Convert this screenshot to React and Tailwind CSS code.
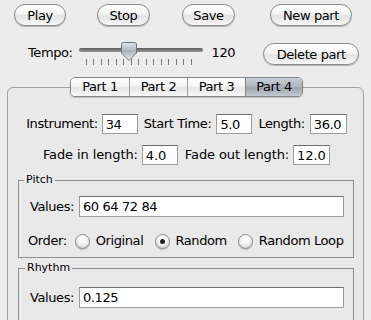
const aquaBtn =
  'h-[22px] rounded-full border border-[#8c8c8c] bg-[linear-gradient(to_bottom,#ffffff_0%,#f4f4f4_45%,#e3e3e3_55%,#f7f7f7_100%)] shadow-[0_1px_1px_rgba(0,0,0,0.25)] text-[13px] leading-none text-black flex items-center justify-center';

const field =
  'h-[20px] bg-white border border-[#9c9c9c] border-t-[#6e6e6e] text-[13px] leading-none text-black px-[3px] flex items-center';

function Radio({ checked }) {
  return (
    <span className="w-[15px] h-[15px] rounded-full border border-[#8a8a8a] bg-[radial-gradient(circle_at_50%_30%,#ffffff_0%,#f2f2f2_45%,#c9c9c9_100%)] shadow-[0_1px_1px_rgba(0,0,0,0.2)] flex items-center justify-center">
      {checked && <span className="w-[5px] h-[5px] rounded-full bg-[#222]" />}
    </span>
  );
}

function Slider() {
  const ticks = Array.from({ length: 15 }, (_, i) => i);
  return (
    <div className="relative w-[124px] h-[24px] ml-[6px]">
      <div className="mt-[6px] h-[4px] rounded-full bg-[linear-gradient(to_bottom,#5a5a5a,#9a9a9a)]" />
      <div className="mt-[7px] ml-[7px] flex gap-[6.5px]">
        {ticks.map((t) => (
          <span key={t} className="w-px h-[6px] bg-[#7a7a7a]" />
        ))}
      </div>
      <svg className="absolute left-[42px] top-[0px]" width="16" height="19" viewBox="0 0 16 19">
        <defs>
          <linearGradient id="thumb" x1="0" y1="0" x2="0" y2="1">
            <stop offset="0" stopColor="#dfe4ea" />
            <stop offset="0.5" stopColor="#aab3be" />
            <stop offset="1" stopColor="#eef1f4" />
          </linearGradient>
        </defs>
        <path d="M2.5 0.5 H13.5 Q15.5 0.5 15.5 2.5 V11 L8 18.5 L0.5 11 V2.5 Q0.5 0.5 2.5 0.5 Z" fill="url(#thumb)" stroke="#6d7480" />
      </svg>
    </div>
  );
}

export default function App() {
  return (
    <div className="w-[371px] h-[320px] overflow-hidden bg-[#ececec] font-['DejaVu_Sans',sans-serif] tracking-[-0.4px] text-black">
      {/* buttons */}
      <div className="flex pt-[4px]">
        <button className={`${aquaBtn} ml-[14px] w-[52px] border-[#6b7888] shadow-[0_0_0_1px_rgba(120,140,170,0.35)]`}>Play</button>
        <button className={`${aquaBtn} ml-[31px] w-[53px]`}>Stop</button>
        <button className={`${aquaBtn} ml-[32px] w-[53px]`}>Save</button>
        <button className={`${aquaBtn} ml-[35px] w-[82px]`}>New part</button>
      </div>

      {/* tempo */}
      <div className="flex items-start mt-[16px] h-[24px]">
        <span className="ml-[28px] mt-[3px] text-[13px] leading-[16px]">Tempo:</span>
        <Slider />
        <span className="ml-[9px] mt-[3px] text-[13px] leading-[16px]">120</span>
        <button className={`${aquaBtn} ml-[28px] mt-[1px] w-[96px] h-[21px]`}>Delete part</button>
      </div>

      {/* tabs */}
      <div className="relative z-10 flex mt-[11px] ml-[70px] w-[233px] h-[20px] rounded-[5px] border border-[#868686] overflow-hidden shadow-[0_1px_1px_rgba(0,0,0,0.2)] text-[13px]">
        {['Part 1', 'Part 2', 'Part 3'].map((p, i) => (
          <div
            key={p}
            className={`w-[58px] flex items-center justify-center bg-[linear-gradient(to_bottom,#ffffff_0%,#f4f4f4_45%,#e5e5e5_55%,#f7f7f7_100%)] ${i > 0 ? 'border-l border-[#a0a0a0]' : ''}`}
          >
            {p}
          </div>
        ))}
        <div className="flex-1 flex items-center justify-center border-l border-[#7c8590] bg-[linear-gradient(to_bottom,#c9cfd6_0%,#b0b7c0_45%,#9ea6b0_55%,#c3c9d0_100%)]">
          Part 4
        </div>
      </div>

      {/* panel */}
      <div className="mt-[-10px] ml-[7px] w-[357px] h-[260px] rounded-[6px] border border-[#a2a2a2] bg-[#e9e9e9] pt-[26px] text-[13px]">
        <div className="flex items-center justify-center h-[20px] pl-[2px]">
          <span>Instrument:</span>
          <div className={`${field} ml-[4px] w-[36px]`}>34</div>
          <span className="ml-[6px]">Start Time:</span>
          <div className={`${field} ml-[5px] w-[36px]`}>5.0</div>
          <span className="ml-[6px]">Length:</span>
          <div className={`${field} ml-[5px] w-[37px]`}>36.0</div>
        </div>

        <div className="flex items-center justify-center h-[20px] mt-[11px] pl-[2px] tracking-[-0.1px]">
          <span>Fade in length:</span>
          <div className={`${field} ml-[4px] w-[36px]`}>4.0</div>
          <span className="ml-[7px]">Fade out length:</span>
          <div className={`${field} ml-[4px] w-[37px]`}>12.0</div>
        </div>

        <fieldset className="mt-[8px] ml-[10px] w-[336px] border border-[#8e8e8e] pl-[11px] pr-[9px] pb-[8px]">
          <legend className="-ml-[6px] px-[2px] text-[11px] leading-[14px] tracking-normal">Pitch</legend>
          <div className="flex items-center mt-[9px]">
            <span className="w-[49px]">Values:</span>
            <div className={`${field} flex-1 h-[21px]`}>60 64 72 84</div>
          </div>
          <div className="flex items-center mt-[16px] h-[16px] -ml-[2px]">
            <span>Order:</span>
            <span className="ml-[8px]"><Radio /></span>
            <span className="ml-[6px]">Original</span>
            <span className="ml-[12px]"><Radio checked /></span>
            <span className="ml-[5px]">Random</span>
            <span className="ml-[11px]"><Radio /></span>
            <span className="ml-[6px]">Random Loop</span>
          </div>
        </fieldset>

        <fieldset className="mt-[3px] ml-[10px] w-[336px] h-[80px] border border-[#8e8e8e] pl-[11px] pr-[9px]">
          <legend className="-ml-[5px] px-[2px] text-[11px] leading-[14px] tracking-normal">Rhythm</legend>
          <div className="flex items-center mt-[12px]">
            <span className="w-[49px]">Values:</span>
            <div className={`${field} flex-1 h-[21px]`}>0.125</div>
          </div>
        </fieldset>
      </div>
    </div>
  );
}
